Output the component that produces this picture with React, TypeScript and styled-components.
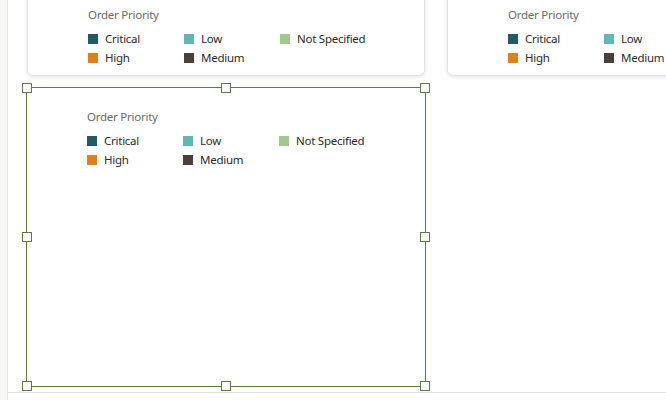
import React from 'react';
import styled, { createGlobalStyle } from 'styled-components';

const COLOR = {
    SELECT: '#5d7c45',
    TITLE: '#6b6b6b',
    TEXT: '#2b2b2b',
    DIVIDER: '#e2e2e2',
    SIDEBAR: '#f8f7f5',
};

interface ILegendItem {
    label: string;
    color: string;
}

const LEGEND: ILegendItem[] = [
    { label: 'Critical', color: '#245b62' },
    { label: 'Low', color: '#5fb8b4' },
    { label: 'Not Specified', color: '#a0c98b' },
    { label: 'High', color: '#e0801a' },
    { label: 'Medium', color: '#4a4039' },
];

const GlobalStyle = createGlobalStyle`
    html, body {
        margin: 0;
        padding: 0;
        background: #ffffff;
        font-family: "Noto Sans", "Open Sans", sans-serif;
    }
`;

const Legend = ({ columns }: { columns: number }) => {
    const items = columns === 3
        ? LEGEND
        : [LEGEND[0], LEGEND[1], LEGEND[3], LEGEND[4]];

    return (
        <LegendBody>
            <LegendTitle>Order Priority</LegendTitle>
            <LegendGrid columns={columns}>
                {items.map(item => (
                    <LegendItem key={item.label}>
                        <Swatch color={item.color} />
                        <LegendLabel>{item.label}</LegendLabel>
                    </LegendItem>
                ))}
            </LegendGrid>
        </LegendBody>
    );
};

const HANDLES: [string, string][] = [
    ['0%', '0%'], ['50%', '0%'], ['100%', '0%'],
    ['0%', '50%'], ['100%', '50%'],
    ['0%', '100%'], ['50%', '100%'], ['100%', '100%'],
];

const App = () => {
    return (
        <>
            <GlobalStyle />
            <Page>
                <Sidebar />
                <Main>
                    <Canvas>
                        <TileGrid>
                            <Slot>
                                <Card>
                                    <Legend columns={3} />
                                </Card>
                            </Slot>
                            <Slot>
                                <Card>
                                    <Legend columns={2} />
                                </Card>
                            </Slot>
                            <Slot>
                                <Selected>
                                    <Legend columns={3} />
                                    {HANDLES.map(([x, y]) => (
                                        <Handle key={x + y} style={{ left: x, top: y }} />
                                    ))}
                                </Selected>
                            </Slot>
                        </TileGrid>
                    </Canvas>
                </Main>
            </Page>
        </>
    );
};

const Page = styled.div`
    display: flex;
    width: 666px;
    height: 400px;
    overflow: hidden;
`;

const Sidebar = styled.div`
    width: 7px;
    flex-shrink: 0;
    background: ${COLOR.SIDEBAR};
    border-right: 1px solid #e7e5e1;
`;

const Main = styled.div`
    flex: 1;
    min-width: 0;
`;

const Canvas = styled.div`
    height: 392px;
    border-bottom: 1px solid ${COLOR.DIVIDER};
    overflow: hidden;
    padding-left: 18px;
`;

const TileGrid = styled.div`
    display: grid;
    grid-template-columns: 400px 400px;
    grid-template-rows: 93px 300px;
    column-gap: 20px;
    row-gap: 10px;
    margin-top: -16px;
`;

const Slot = styled.div`
    position: relative;
    padding: 1px;
    box-sizing: border-box;
`;

const Card = styled.div`
    height: 100%;
    box-sizing: border-box;
    background: #ffffff;
    border: 1px solid #e3e3e3;
    border-radius: 6px;
    box-shadow: 0 1px 4px rgba(0, 0, 0, 0.12);
`;

const Selected = styled.div`
    position: absolute;
    inset: 0;
    border: 1px solid ${COLOR.SELECT};
`;

const Handle = styled.span`
    position: absolute;
    width: 8px;
    height: 8px;
    margin: -5px 0 0 -5px;
    background: #ffffff;
    border: 1px solid ${COLOR.SELECT};
`;

const LegendBody = styled.div`
    display: flex;
    flex-direction: column;
    padding: 21px 0 0 60px;
`;

const LegendTitle = styled.div`
    font-size: 11.5px;
    letter-spacing: -0.25px;
    line-height: 16px;
    color: ${COLOR.TITLE};
    margin-bottom: 8px;
`;

const LegendGrid = styled.div<{ columns: number }>`
    display: grid;
    grid-template-columns: repeat(${p => p.columns}, 96px);
    grid-auto-rows: 16px;
    row-gap: 3px;
`;

const LegendItem = styled.div`
    display: flex;
    align-items: center;
    gap: 7px;
`;

const Swatch = styled.span<{ color: string }>`
    width: 10px;
    height: 10px;
    flex-shrink: 0;
    background: ${p => p.color};
`;

const LegendLabel = styled.span`
    font-size: 11.5px;
    letter-spacing: -0.25px;
    line-height: 16px;
    color: ${COLOR.TEXT};
    white-space: nowrap;
`;

export default App;
